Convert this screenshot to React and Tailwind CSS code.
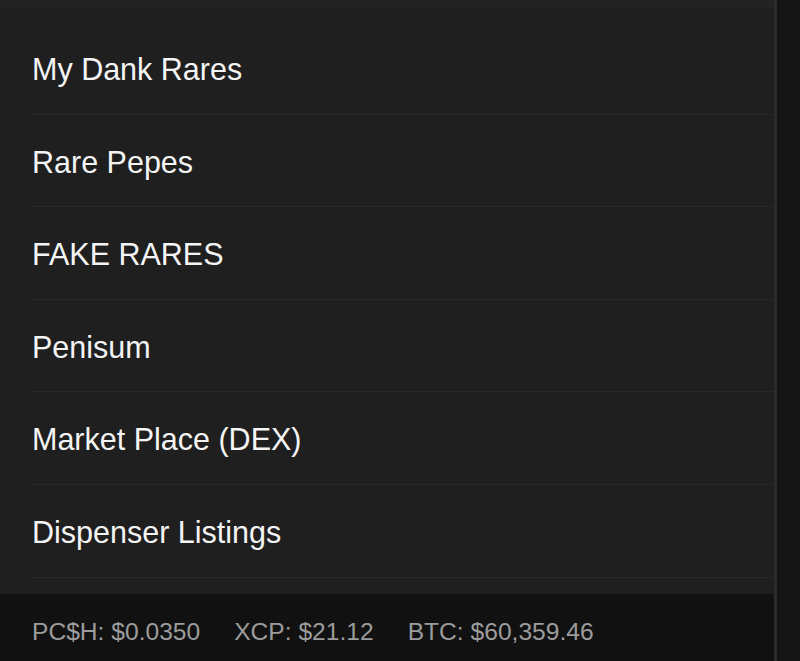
const items = [
  "My Dank Rares",
  "Rare Pepes",
  "FAKE RARES",
  "Penisum",
  "Market Place (DEX)",
  "Dispenser Listings",
]

const prices = [
  { label: "PC$H", value: "$0.0350" },
  { label: "XCP", value: "$21.12" },
  { label: "BTC", value: "$60,359.46" },
]

export default function App() {
  return (
    <div
      className="flex h-[661px] w-full overflow-hidden bg-[#1f1f1f]"
      style={{ fontFamily: '"Liberation Sans", Arial, sans-serif' }}
    >
      <div className="flex flex-1 flex-col">
        <div className="h-2 bg-[#232323]" />
        <div className="flex-1 bg-[#1f1f1f] pt-[14px]">
          {items.map((item) => (
            <div key={item} className="ml-8 flex h-[92.6px] items-center border-b border-[#282828]">
              <span className="pt-[3px] text-[30.5px] leading-none text-[#f4f4f4]">{item}</span>
            </div>
          ))}
        </div>
        <div className="flex h-[67px] items-center gap-[34px] bg-[#111111] px-8 pt-[10px]">
          {prices.map((p) => (
            <span key={p.label} className="text-[24.6px] leading-none text-[#9c9c9c]">
              {p.label}: {p.value}
            </span>
          ))}
        </div>
      </div>
      <div className="w-[3px] bg-[#2c2c2c]" />
      <div className="w-[23px] bg-[#151515]" />
    </div>
  )
}
